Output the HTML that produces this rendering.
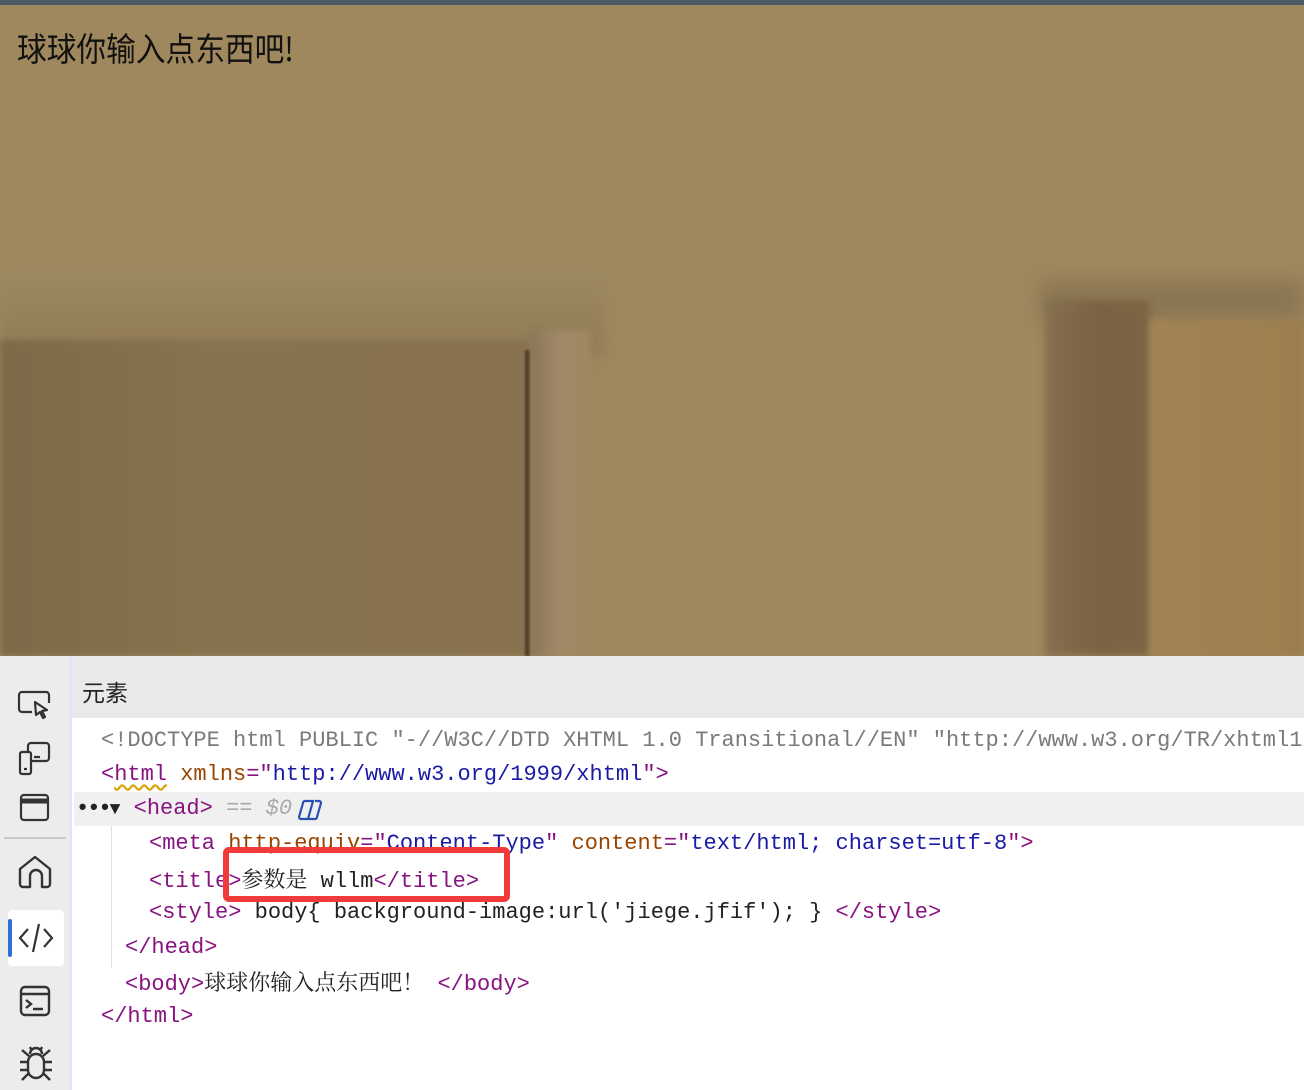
<!DOCTYPE html>
<html><head><meta charset="utf-8"><style>
*{margin:0;padding:0;box-sizing:border-box}
body{width:1304px;height:1090px;position:relative;overflow:hidden;background:#fff;font-family:"Liberation Sans","Noto Sans CJK SC",sans-serif}
#page{position:absolute;left:0;top:0;width:1304px;height:656px;background:#9f885d;overflow:hidden}
.a{position:absolute}
#dev{position:absolute;left:0;top:656px;width:1304px;height:434px;background:#fff}
#side{position:absolute;left:0;top:0;width:72px;height:434px;background:#ececec;border-right:2px solid #dbe6f7}
#hdr{position:absolute;left:72px;top:0;right:0;height:62px;background:#e9e9e9;font-size:23px;color:#222;padding:18px 0 0 10px;font-family:"Noto Sans CJK SC",sans-serif}
.l{position:absolute;font-family:"Liberation Mono","Noto Sans CJK SC",monospace;font-size:22px;white-space:pre;line-height:26px;color:#222}
.t{color:#881280}.n{color:#994500}.v{color:#1a1aa6}.g{color:#7a7a7a}
.ic{position:absolute;left:17px}
</style></head><body>
<div id="page">
<div class="a" style="left:0;top:0;width:1304px;height:5px;background:#4b5b63"></div>
<div class="a" style="left:0;top:265px;width:605px;height:90px;background:linear-gradient(180deg,#9e8a62,#8f7a55);filter:blur(8px)"></div>
<div class="a" style="left:0;top:340px;width:530px;height:316px;background:linear-gradient(90deg,#7e6a48,#88734f 40%,#88724f);filter:blur(3px)"></div>
<div class="a" style="left:525px;top:350px;width:5px;height:306px;background:#4d3b25;filter:blur(1px)"></div>
<div class="a" style="left:531px;top:330px;width:60px;height:326px;background:linear-gradient(90deg,#8c765a,#a08a68,#9f885d);filter:blur(3px)"></div>
<div class="a" style="left:1040px;top:280px;width:264px;height:40px;background:#8b7653;filter:blur(10px)"></div>
<div class="a" style="left:1045px;top:300px;width:105px;height:356px;background:linear-gradient(90deg,#857050,#7a6242,#7c6544);filter:blur(4px)"></div>
<div class="a" style="left:1150px;top:320px;width:154px;height:336px;background:linear-gradient(90deg,#a08255,#9c7e4f);filter:blur(3px)"></div>
<div class="a" style="left:17px;top:28px;font-size:33px;color:#111;font-family:'Noto Sans CJK SC',sans-serif;line-height:38px;transform:scaleX(.9);transform-origin:left">球球你输入点东西吧!</div>
</div>
<div id="dev">
<div id="side">
<svg class="ic" style="top:34px" width="36" height="32" viewBox="0 0 36 32" fill="none" stroke="#333" stroke-width="2.2" stroke-linejoin="round"><path d="M15 22H5a3 3 0 0 1-3-3V5a3 3 0 0 1 3-3h24a3 3 0 0 1 3 3v8"/><path d="M18 12l12 8-5 1 3 6-2 1-3-6-4 3z"/></svg>
<svg class="ic" style="top:84px" width="36" height="36" viewBox="0 0 36 36" fill="none" stroke="#333" stroke-width="2.2"><rect x="11" y="3" width="21" height="18" rx="3"/><rect x="3" y="12" width="11" height="22" rx="2" fill="#ececec"/><path d="M7 29h3M17 17h6"/></svg>
<svg class="ic" style="top:136px" width="36" height="32" viewBox="0 0 36 32" fill="none" stroke="#333" stroke-width="2.2"><rect x="4" y="3" width="27" height="25" rx="3"/><path d="M4 9h27" stroke-width="5"/></svg>
<div class="a" style="left:4px;top:181px;width:62px;height:2px;background:#c8c8c8"></div>
<svg class="ic" style="top:198px" width="36" height="36" viewBox="0 0 36 36" fill="none" stroke="#333" stroke-width="2.4" stroke-linejoin="round"><path d="M3 15L18 3l15 12v15a3 3 0 0 1-3 3h-5V22a6 6 0 0 0-12 0v11H6a3 3 0 0 1-3-3z"/></svg>
<div class="a" style="left:8px;top:254px;width:56px;height:56px;background:#fff;border-radius:4px"></div>
<div class="a" style="left:8px;top:263px;width:4px;height:38px;background:#2f6fd6;border-radius:2px"></div>
<svg class="ic" style="top:265px" width="38" height="34" viewBox="0 0 38 34" fill="none" stroke="#333" stroke-width="2.2"><path d="M11 8L3 17l8 9M27 8l8 9-8 9M22 3L16 31"/></svg>
<svg class="ic" style="top:328px" width="36" height="34" viewBox="0 0 36 34" fill="none" stroke="#333" stroke-width="2.4"><rect x="4" y="3" width="28" height="28" rx="4"/><path d="M4 10h28M9 16l5 4-5 4M16 25h10"/></svg>
<svg class="ic" style="top:388px" width="38" height="40" viewBox="0 0 38 40" fill="none" stroke="#333" stroke-width="2.4"><rect x="11" y="10" width="16" height="24" rx="8"/><path d="M13 10a6 6 0 0 1 12 0M11 18H3M27 18h8M11 26H3M27 26h8M13 3l2 4M25 3l-2 4M11 30l-6 6M27 30l6 6M12 12L5 6M26 12l7-6"/></svg>
</div>
<div id="hdr">元素</div>
<div class="a" style="left:74px;top:136px;width:1230px;height:34px;background:#f0f0f0"></div>
<div class="a" style="left:111px;top:170px;width:1px;height:142px;background:#d7e3f5"></div>
<div class="l g" style="left:101px;top:72px">&lt;!DOCTYPE html PUBLIC "-//W3C//DTD XHTML 1.0 Transitional//EN" "http://www.w3.org/TR/xhtml1/</div>
<div class="l" style="left:101px;top:106px"><span class="t">&lt;<span style="text-decoration:underline wavy #d9a400;text-underline-offset:4px">html</span></span> <span class="n">xmlns</span><span class="t">="</span><span class="v">http://www.w3.org/1999/xhtml</span><span class="t">"&gt;</span></div>
<div class="l" style="left:76px;top:140px"><b style="letter-spacing:-2px">•••</b><span style="font-size:18px">▼</span> <span class="t">&lt;head&gt;</span> <span style="color:#aaa">== <i>$0</i></span></div>
<svg class="a" style="left:297px;top:141px" width="28" height="26" viewBox="0 0 28 26" fill="none" stroke="#2a4fb5" stroke-width="2.2"><path d="M8 4h8l-5 18H4a2 2 0 0 1-2-2L6 6a2 2 0 0 1 2-2zM18 4h4a2 2 0 0 1 2 2l-4 14a2 2 0 0 1-2 2h-6"/></svg>
<div class="l" style="left:149px;top:175px"><span class="t">&lt;meta</span> <span class="n">http-equiv</span><span class="t">="</span><span class="v">Content-Type</span><span class="t">"</span> <span class="n">content</span><span class="t">="</span><span class="v">text/html; charset=utf-8</span><span class="t">"&gt;</span></div>
<div class="l" style="left:149px;top:210px"><span class="t">&lt;title&gt;</span><span style="font-family:'Noto Serif CJK SC',serif">参数是</span> wllm<span class="t">&lt;/title&gt;</span></div>
<div class="l" style="left:149px;top:244px"><span class="t">&lt;style&gt;</span> body{ background-image:url('jiege.jfif'); } <span class="t">&lt;/style&gt;</span></div>
<div class="l" style="left:125px;top:279px"><span class="t">&lt;/head&gt;</span></div>
<div class="l" style="left:125px;top:313px"><span class="t">&lt;body&gt;</span><span style="font-family:'Noto Serif CJK SC',serif">球球你输入点东西吧！</span> <span class="t">&lt;/body&gt;</span></div>
<div class="l" style="left:101px;top:348px"><span class="t">&lt;/html&gt;</span></div>
<div class="a" style="left:223px;top:191px;width:287px;height:55px;border:6px solid #f23a3a;border-radius:6px"></div>
</div>
</body></html>
